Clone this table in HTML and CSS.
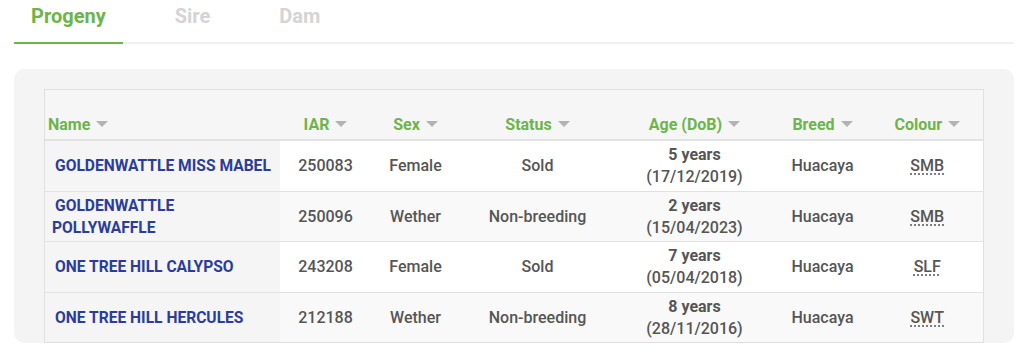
FILE: index.html
```html
<!DOCTYPE html>
<html lang="en">
<head>
<meta charset="utf-8">
<title>Progeny</title>
<link rel="stylesheet" href="styles.css">
</head>
<body>
<div class="tabs">
  <div class="tab active">Progeny</div>
  <div class="tab">Sire</div>
  <div class="tab">Dam</div>
</div>
<div class="panel">
  <table class="grid">
    <colgroup>
      <col class="c-name"><col class="c-iar"><col class="c-sex"><col class="c-status"><col class="c-age"><col class="c-breed"><col class="c-colour">
    </colgroup>
    <thead>
      <tr>
        <th class="th-name">Name<svg class="arrow" viewBox="0 0 12 6"><path d="M0 0H12L6 6Z"/></svg></th>
        <th>IAR<svg class="arrow" viewBox="0 0 12 6"><path d="M0 0H12L6 6Z"/></svg></th>
        <th>Sex<svg class="arrow" viewBox="0 0 12 6"><path d="M0 0H12L6 6Z"/></svg></th>
        <th>Status<svg class="arrow" viewBox="0 0 12 6"><path d="M0 0H12L6 6Z"/></svg></th>
        <th>Age (DoB)<svg class="arrow" viewBox="0 0 12 6"><path d="M0 0H12L6 6Z"/></svg></th>
        <th>Breed<svg class="arrow" viewBox="0 0 12 6"><path d="M0 0H12L6 6Z"/></svg></th>
        <th>Colour<svg class="arrow" viewBox="0 0 12 6"><path d="M0 0H12L6 6Z"/></svg></th>
      </tr>
    </thead>
    <tbody>
      <tr>
        <td class="name"><a href="#">GOLDENWATTLE MISS MABEL</a></td>
        <td>250083</td><td>Female</td><td>Sold</td>
        <td><b>5 years</b><br>(17/12/2019)</td>
        <td>Huacaya</td><td><abbr>SMB</abbr></td>
      </tr>
      <tr>
        <td class="name"><a href="#">GOLDENWATTLE POLLYWAFFLE</a></td>
        <td>250096</td><td>Wether</td><td>Non-breeding</td>
        <td><b>2 years</b><br>(15/04/2023)</td>
        <td>Huacaya</td><td><abbr>SMB</abbr></td>
      </tr>
      <tr>
        <td class="name"><a href="#">ONE TREE HILL CALYPSO</a></td>
        <td>243208</td><td>Female</td><td>Sold</td>
        <td><b>7 years</b><br>(05/04/2018)</td>
        <td>Huacaya</td><td><abbr>SLF</abbr></td>
      </tr>
      <tr>
        <td class="name"><a href="#">ONE TREE HILL HERCULES</a></td>
        <td>212188</td><td>Wether</td><td>Non-breeding</td>
        <td><b>8 years</b><br>(28/11/2016)</td>
        <td>Huacaya</td><td><abbr>SWT</abbr></td>
      </tr>
    </tbody>
  </table>
</div>
</body>
</html>
```
FILE: styles.css
```css
* { box-sizing: border-box; }
body {
  margin: 0;
  font-family: Roboto, "Liberation Sans", Arial, sans-serif;
  background: #fff;
}
.tabs {
  display: flex;
  gap: 35px;
  margin: 0 10px 0 14px;
  border-bottom: 2px solid #f0f0f0;
}
.tab {
  padding: 4px 17px 14px;
  font-size: 20px;
  line-height: 24px;
  font-weight: 700;
  color: #d4d4d4;
  margin-bottom: -2px;
  border-bottom: 2px solid transparent;
}
.tab.active {
  color: #6db44b;
  border-bottom-color: #6db44b;
}
.panel {
  margin: 25px 10px 0 14px;
  background: #f4f4f4;
  border-radius: 10px;
  padding: 20px 30px 0 30px;
}
.grid {
  width: 939px;
  table-layout: fixed;
  border-collapse: collapse;
  border: 1px solid #e0e0e0;
  font-size: 16px;
}
.c-name { width: 235px; }
.c-iar { width: 92px; }
.c-sex { width: 88px; }
.c-status { width: 156px; }
.c-age { width: 158px; }
.c-breed { width: 98px; }
.c-colour { width: 112px; }
th {
  background: #f6f6f6;
  color: #6db44b;
  font-weight: 700;
  font-size: 16px;
  line-height: 22px;
  padding: 24px 4px 3px;
  text-align: center;
  border-bottom: 2px solid #e2e2e2;
  white-space: nowrap;
}
th.th-name { text-align: left; padding-left: 3px; }
.arrow {
  width: 12px;
  height: 6px;
  margin-left: 6px;
  vertical-align: 3px;
  fill: #b3b3b3;
}
td {
  padding: 3px 4px 2.5px;
  line-height: 22px;
  text-align: center;
  color: #555;
  font-weight: 500;
  border-top: 1px solid #e2e2e2;
  background: #fff;
}
tbody tr:nth-child(even) td { background: #f9f9f9; }
td b { font-weight: 700; }
td.name, tbody tr:nth-child(even) td.name {
  background: #f5f5f5;
  text-align: left;
  padding-left: 7px;
  padding-right: 1px;
  text-indent: 3px;
}
td.name a {
  color: #2a3d9c;
  font-size: 15.6px;
  font-weight: 700;
  text-decoration: none;
}
abbr {
  text-decoration: underline dotted;
  text-underline-offset: 3px;
}
```
